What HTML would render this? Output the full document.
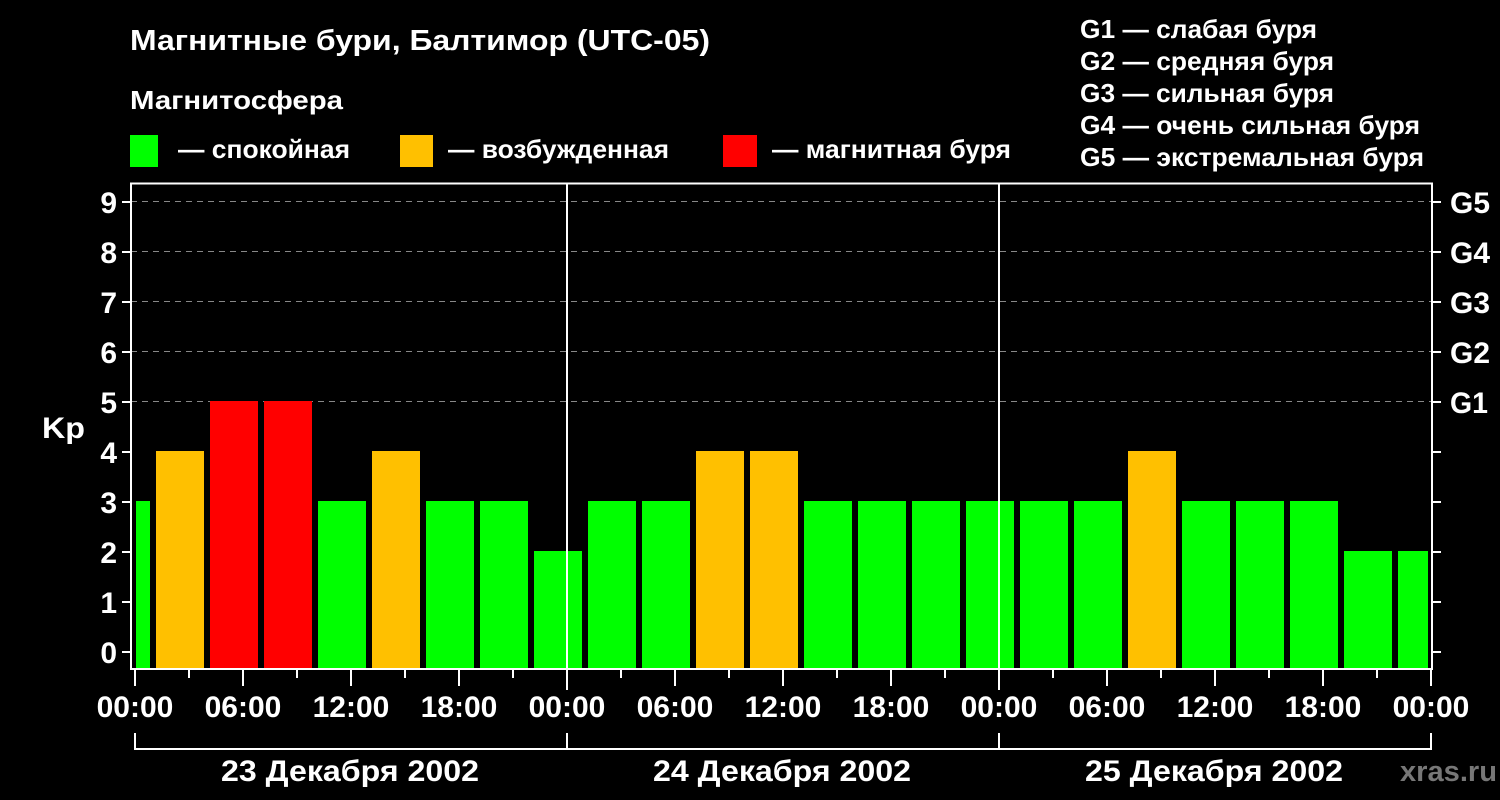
<!DOCTYPE html><html><head><style>html,body{margin:0;background:#000;}svg{display:block}</style></head><body>
<svg width="1500" height="800" xmlns="http://www.w3.org/2000/svg" font-family="Liberation Sans, sans-serif" font-weight="bold" fill="#fff">
<rect width="1500" height="800" fill="#000"/>
<text x="130" y="50" font-size="29" textLength="580" lengthAdjust="spacingAndGlyphs">Магнитные бури, Балтимор (UTC-05)</text>
<text x="130" y="109" font-size="26" textLength="213" lengthAdjust="spacingAndGlyphs">Магнитосфера</text>
<rect x="130" y="135" width="28" height="32" fill="#00ff00"/>
<rect x="400" y="135" width="33" height="32" fill="#ffc000"/>
<rect x="723" y="135" width="34" height="32" fill="#ff0000"/>
<g font-size="26">
<text x="178" y="158" textLength="172" lengthAdjust="spacingAndGlyphs">— спокойная</text>
<text x="448" y="158" textLength="221" lengthAdjust="spacingAndGlyphs">— возбужденная</text>
<text x="772" y="158" textLength="239" lengthAdjust="spacingAndGlyphs">— магнитная буря</text>
<text x="1080" y="38" textLength="237" lengthAdjust="spacingAndGlyphs">G1 — слабая буря</text>
<text x="1080" y="70" textLength="254" lengthAdjust="spacingAndGlyphs">G2 — средняя буря</text>
<text x="1080" y="102" textLength="254" lengthAdjust="spacingAndGlyphs">G3 — сильная буря</text>
<text x="1080" y="134" textLength="340" lengthAdjust="spacingAndGlyphs">G4 — очень сильная буря</text>
<text x="1080" y="166" textLength="344" lengthAdjust="spacingAndGlyphs">G5 — экстремальная буря</text>
</g>
<g stroke="#888" stroke-width="1" stroke-dasharray="6,5">
<line x1="131" y1="201.5" x2="1432" y2="201.5"/><line x1="131" y1="251.5" x2="1432" y2="251.5"/><line x1="131" y1="301.5" x2="1432" y2="301.5"/><line x1="131" y1="351.5" x2="1432" y2="351.5"/><line x1="131" y1="401.5" x2="1432" y2="401.5"/>
</g>
<g>
<rect x="136" y="501" width="14" height="167" fill="#00ff00"/>
<rect x="156" y="451" width="48" height="217" fill="#ffc000"/>
<rect x="210" y="401" width="48" height="267" fill="#ff0000"/>
<rect x="264" y="401" width="48" height="267" fill="#ff0000"/>
<rect x="318" y="501" width="48" height="167" fill="#00ff00"/>
<rect x="372" y="451" width="48" height="217" fill="#ffc000"/>
<rect x="426" y="501" width="48" height="167" fill="#00ff00"/>
<rect x="480" y="501" width="48" height="167" fill="#00ff00"/>
<rect x="534" y="551" width="48" height="117" fill="#00ff00"/>
<rect x="588" y="501" width="48" height="167" fill="#00ff00"/>
<rect x="642" y="501" width="48" height="167" fill="#00ff00"/>
<rect x="696" y="451" width="48" height="217" fill="#ffc000"/>
<rect x="750" y="451" width="48" height="217" fill="#ffc000"/>
<rect x="804" y="501" width="48" height="167" fill="#00ff00"/>
<rect x="858" y="501" width="48" height="167" fill="#00ff00"/>
<rect x="912" y="501" width="48" height="167" fill="#00ff00"/>
<rect x="966" y="501" width="48" height="167" fill="#00ff00"/>
<rect x="1020" y="501" width="48" height="167" fill="#00ff00"/>
<rect x="1074" y="501" width="48" height="167" fill="#00ff00"/>
<rect x="1128" y="451" width="48" height="217" fill="#ffc000"/>
<rect x="1182" y="501" width="48" height="167" fill="#00ff00"/>
<rect x="1236" y="501" width="48" height="167" fill="#00ff00"/>
<rect x="1290" y="501" width="48" height="167" fill="#00ff00"/>
<rect x="1344" y="551" width="48" height="117" fill="#00ff00"/>
<rect x="1398" y="551" width="30" height="117" fill="#00ff00"/>
</g>
<g stroke="#fff" stroke-width="2" fill="none">
<polyline points="131,668 131,183.5 1432,183.5 1432,669"/>
<line x1="130" y1="669" x2="1433" y2="669"/>
<line x1="567" y1="183" x2="567" y2="690"/>
<line x1="999" y1="183" x2="999" y2="690"/>
<path d="M122 202H131M122 252H131M122 302H131M122 352H131M122 402H131M122 452H131M122 502H131M122 552H131M122 602H131M122 652H131"/>
<path d="M1432 202H1441M1432 252H1441M1432 302H1441M1432 352H1441M1432 402H1441M1432 452H1441M1432 502H1441M1432 552H1441M1432 602H1441M1432 652H1441"/>
<path d="M135 670V686M243 670V686M351 670V686M459 670V686M675 670V686M783 670V686M891 670V686M1107 670V686M1215 670V686M1323 670V686M1431 670V686"/>
<path d="M189 670V678M297 670V678M405 670V678M513 670V678M621 670V678M729 670V678M837 670V678M945 670V678M1053 670V678M1161 670V678M1269 670V678M1377 670V678"/>
<path d="M135 733V750M567 733V750M999 733V750M1431 733V750M134 749H1432"/>
</g>
<g font-size="30" text-anchor="end">
<text x="117" y="213">9</text><text x="117" y="263">8</text><text x="117" y="313">7</text><text x="117" y="363">6</text><text x="117" y="413">5</text><text x="117" y="463">4</text><text x="117" y="513">3</text><text x="117" y="563">2</text><text x="117" y="613">1</text><text x="117" y="663">0</text>
</g>
<g font-size="30">
<text x="1450" y="213" textLength="40" lengthAdjust="spacingAndGlyphs">G5</text><text x="1450" y="263" textLength="40" lengthAdjust="spacingAndGlyphs">G4</text><text x="1450" y="313" textLength="40" lengthAdjust="spacingAndGlyphs">G3</text><text x="1450" y="363" textLength="40" lengthAdjust="spacingAndGlyphs">G2</text><text x="1450" y="413" textLength="38" lengthAdjust="spacingAndGlyphs">G1</text>
<text x="42" y="438" textLength="43" lengthAdjust="spacingAndGlyphs">Kp</text>
</g>
<g font-size="30" text-anchor="middle">
<text x="135" y="717">00:00</text><text x="243" y="717">06:00</text><text x="351" y="717">12:00</text><text x="459" y="717">18:00</text>
<text x="567" y="717">00:00</text><text x="675" y="717">06:00</text><text x="783" y="717">12:00</text><text x="891" y="717">18:00</text>
<text x="999" y="717">00:00</text><text x="1107" y="717">06:00</text><text x="1215" y="717">12:00</text><text x="1323" y="717">18:00</text>
<text x="1431" y="717">00:00</text>
<text x="350" y="781" textLength="258" lengthAdjust="spacingAndGlyphs">23 Декабря 2002</text><text x="782" y="781" textLength="258" lengthAdjust="spacingAndGlyphs">24 Декабря 2002</text><text x="1214" y="781" textLength="258" lengthAdjust="spacingAndGlyphs">25 Декабря 2002</text>
</g>
<text x="1400" y="781" font-size="29" fill="#777" textLength="97" lengthAdjust="spacingAndGlyphs">xras.ru</text>
</svg>
</body></html>
